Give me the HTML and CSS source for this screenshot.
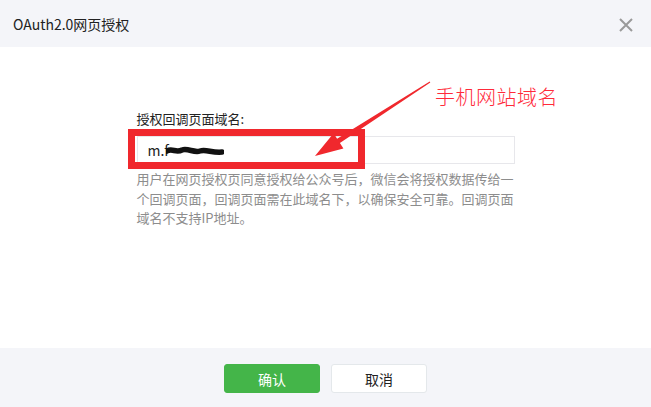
FILE: index.html
```html
<!DOCTYPE html>
<html lang="zh">
<head>
<meta charset="utf-8">
<link rel="stylesheet" href="styles.css">
</head>
<body>
<div class="dialog">
  <div class="dlg-head">
    <span class="dlg-title">OAuth2.0网页授权</span>
    <svg class="dlg-close" width="14" height="14" viewBox="0 0 14 14"><path d="M1 1 L13 13 M13 1 L1 13" stroke="#9a9a9a" stroke-width="2" fill="none"/></svg>
  </div>
  <div class="dlg-body">
    <div class="form">
      <div class="label">授权回调页面域名:</div>
      <div class="input"><span class="val">m.f</span><svg class="scribble" width="58" height="12" viewBox="0 0 58 12"><path d="M1 6 C6 3 10 8 16 5 C22 3 28 8 34 6 C40 4 46 8 56 7" stroke="#111" stroke-width="5.5" fill="none" stroke-linecap="round"/></svg></div>
      <p class="help">用户在网页授权页同意授权给公众号后，微信会将授权数据传给一个回调页面，回调页面需在此域名下，以确保安全可靠。回调页面域名不支持IP地址。</p>
    </div>
  </div>
  <div class="dlg-foot">
    <button class="btn btn-ok">确认</button>
    <button class="btn btn-cancel">取消</button>
  </div>
  <div class="mark-box"></div>
  <svg class="mark-arrow" width="651" height="407" viewBox="0 0 651 407"><polygon points="315,156 343.4,148.5 339.9,143 430.3,82.4 429.7,81.6 337.1,138.8 333.6,133.3" fill="#f0282d"/></svg>
  <div class="mark-text">手机网站域名</div>
</div>
</body>
</html>
```

FILE: styles.css
```css
* { box-sizing: border-box; }
html, body { margin: 0; padding: 0; }
body {
  width: 651px;
  height: 407px;
  background: #fff;
  font-family: "Noto Sans CJK SC", "Noto Sans", sans-serif;
  color: #222;
}
.dialog {
  position: relative;
  width: 651px;
  height: 407px;
  display: flex;
  flex-direction: column;
  overflow: hidden;
}
.dlg-head {
  height: 47px;
  background: #f4f5f9;
  display: flex;
  align-items: center;
  justify-content: space-between;
  padding: 0 18px 0 13px;
}
.dlg-title {
  font-size: 14px;
  color: #222;
  line-height: 20px;
}
.dlg-close { display: block; margin-top: 2px; }
.dlg-body {
  flex: 1;
  display: flex;
  justify-content: center;
  padding-top: 63px;
}
.form { width: 378px; }
.label {
  font-size: 13px;
  line-height: 18px;
  color: #222;
  margin-bottom: 8px;
}
.input {
  height: 28px;
  border: 1px solid #e7e7eb;
  display: flex;
  align-items: center;
  padding-left: 10px;
}
.val {
  font-size: 14px;
  color: #222;
  line-height: 20px;
}
.scribble { display: block; margin-top: 2px; margin-left: -3px; }
.help {
  margin: 5px 0 0;
  font-size: 13px;
  line-height: 19.5px;
  color: #8d8d8d;
}
.dlg-foot {
  height: 59px;
  background: #f4f5f9;
  display: flex;
  justify-content: center;
  align-items: flex-start;
  padding-top: 16px;
  gap: 11px;
}
.btn {
  width: 96px;
  height: 29px;
  border-radius: 3px;
  font-family: inherit;
  font-size: 14px;
  padding: 0;
  cursor: pointer;
}
.btn-ok {
  background: #44b549;
  border: 1px solid #44b549;
  color: #fff;
}
.btn-cancel {
  background: #fff;
  border: 1px solid #e4e8eb;
  color: #222;
}
.mark-box {
  position: absolute;
  left: 128px;
  top: 129px;
  width: 237px;
  height: 40px;
  border: 7px solid #f0282d;
}
.mark-arrow {
  position: absolute;
  left: 0;
  top: 0;
  pointer-events: none;
}
.mark-text {
  position: absolute;
  left: 435px;
  top: 84px;
  font-size: 20px;
  line-height: 26px;
  font-weight: 300;
  color: #ff2a3a;
  letter-spacing: 0.5px;
}
```
